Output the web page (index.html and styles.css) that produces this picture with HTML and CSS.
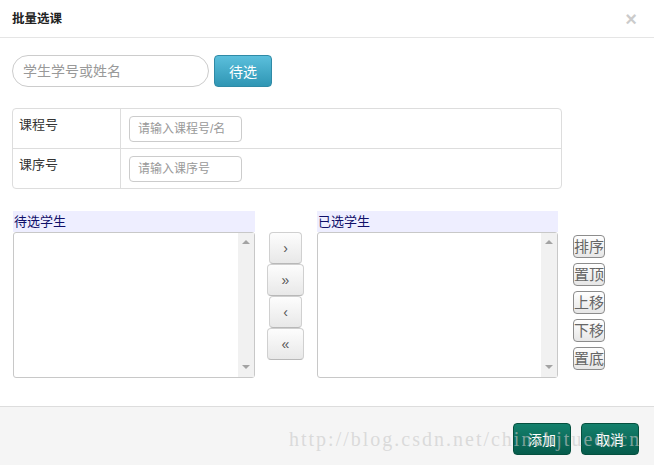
FILE: index.html
```html
<!DOCTYPE html>
<html lang="zh-CN">
  <head>
    <meta charset="UTF-8" />
    <meta name="viewport" content="width=device-width, initial-scale=1.0" />
    <title>批量选课</title>
    <link rel="stylesheet" href="styles.css">
  </head>
  <body>
    <div class="modal">
      <div class="modal-header">
        <h3>批量选课</h3>
        <span class="close">×</span>
      </div>

      <div class="modal-body">
        <div class="search">
          <input type="text" class="search-input" placeholder="学生学号或姓名" />
          <button class="btn-info">待选</button>
        </div>

        <table class="course-table">
          <tr>
            <td class="label">课程号</td>
            <td class="field"><input type="text" placeholder="请输入课程号/名" /></td>
          </tr>
          <tr>
            <td class="label">课序号</td>
            <td class="field"><input type="text" placeholder="请输入课序号" /></td>
          </tr>
        </table>

        <div class="picker">
          <div class="list-box left">
            <div class="list-title">待选学生</div>
            <div class="list">
              <div class="scroll"><span class="up"></span><span class="down"></span></div>
            </div>
          </div>

          <div class="move-btns">
            <button class="mv">›</button>
            <button class="mv wide">»</button>
            <button class="mv">‹</button>
            <button class="mv wide">«</button>
          </div>

          <div class="list-box right">
            <div class="list-title">已选学生</div>
            <div class="list">
              <div class="scroll"><span class="up"></span><span class="down"></span></div>
            </div>
          </div>

          <div class="order-btns">
            <button>排序</button>
            <button>置顶</button>
            <button>上移</button>
            <button>下移</button>
            <button>置底</button>
          </div>
        </div>
      </div>

      <!-- footer -->
      <div class="modal-footer">
        <button class="btn-ok">添加</button>
        <button class="btn-ok">取消</button>
      </div>
    </div>
    <div class="watermark">http://blog.csdn.net/chinabjtueducn</div>
  </body>
</html>
```

FILE: styles.css
```css
* {
  box-sizing: border-box;
}
body {
  margin: 0;
  background: #fff;
  color: #333;
  font-family: "Liberation Sans", "Noto Sans CJK SC", sans-serif;
  font-size: 13px;
}
button {
  font-family: "Liberation Sans", "Noto Sans CJK SC", sans-serif;
  cursor: pointer;
  padding: 0;
}
.modal {
  width: 654px;
  height: 465px;
  display: flex;
  flex-direction: column;
}
.modal-header {
  height: 38px;
  padding: 0 17px 0 12px;
  border-bottom: 1px solid #e5e5e5;
  display: flex;
  align-items: center;
  justify-content: space-between;
}
.modal-header h3 {
  margin: 0;
  font-size: 12.5px;
  font-weight: bold;
  color: #222;
  margin-top: -2px;
}
.close {
  font-size: 20px;
  font-weight: bold;
  color: #000;
  opacity: 0.2;
  margin-top: 2px;
}
.modal-body {
  flex: 1;
  padding: 17px 12px 0;
}
.search {
  display: flex;
  gap: 5px;
  margin-bottom: 21px;
}
.search-input {
  width: 197px;
  height: 32px;
  border: 1px solid #ccc;
  border-radius: 16px;
  padding: 0 10px;
  font-size: 14px;
  font-family: "Liberation Sans", "Noto Sans CJK SC", sans-serif;
}
.search-input::placeholder {
  color: #999;
}
.btn-info {
  width: 58px;
  height: 32px;
  border: 1px solid #2f8aa6;
  border-radius: 4px;
  background: linear-gradient(#5bbfdc, #2f96b4);
  color: #fff;
  font-size: 14px;
}
.course-table {
  width: 550px;
  border: 1px solid #ddd;
  border-radius: 4px;
  border-collapse: separate;
  border-spacing: 0;
  margin-bottom: 22px;
}
.course-table td {
  padding: 7px 8px 6px;
  vertical-align: top;
}
.course-table tr + tr td {
  border-top: 1px solid #ddd;
}
.course-table td.label {
  width: 108px;
  padding: 6px 6px 8px;
  line-height: 19px;
  border-right: 1px solid #ddd;
  color: #333;
}
.field input {
  display: block;
  width: 113px;
  height: 26px;
  border: 1px solid #ccc;
  border-radius: 4px;
  padding: 0 8px;
  font-size: 12px;
  font-family: "Liberation Sans", "Noto Sans CJK SC", sans-serif;
}
.field input::placeholder {
  color: #999;
}
.picker {
  display: flex;
  align-items: flex-start;
  padding-left: 1px;
}
.list-box.left {
  width: 242px;
}
.list-box.right {
  width: 241px;
}
.list-title {
  height: 21px;
  line-height: 21px;
  background: #eeeeff;
  color: #10106a;
  font-size: 13px;
  padding-left: 1px;
}
.list {
  height: 146px;
  border: 1px solid #c8c8c8;
  border-radius: 3px;
  display: flex;
  justify-content: flex-end;
  background: #fff;
}
.scroll {
  width: 16px;
  background: #f1f1f1;
  display: flex;
  flex-direction: column;
  justify-content: space-between;
  align-items: center;
  padding: 7px 0 8px;
}
.up,
.down {
  width: 0;
  height: 0;
  border-left: 4px solid transparent;
  border-right: 4px solid transparent;
}
.up {
  border-bottom: 4px solid #a3a3a3;
}
.down {
  border-top: 4px solid #a3a3a3;
}
.move-btns {
  width: 37px;
  margin: 21px 13px 0 12px;
  display: flex;
  flex-direction: column;
  align-items: center;
}
.mv {
  width: 33px;
  height: 32px;
  border: 1px solid #d0d0d0;
  border-bottom-color: #b8b8b8;
  border-radius: 4px;
  background: linear-gradient(#fdfdfd, #e8e8e8);
  color: #555;
  font-size: 14px;
}
.mv.wide {
  width: 37px;
}
.order-btns {
  margin: 24px 0 0 15px;
  display: flex;
  flex-direction: column;
  gap: 5px;
}
.order-btns button {
  width: 32px;
  height: 23px;
  border: 1px solid #8c8c8c;
  border-radius: 4px;
  background: linear-gradient(#fff, #e6e6e6);
  color: #666;
  font-size: 15px;
  line-height: 20px;
}
.modal-footer {
  height: 59px;
  border-top: 1px solid #ddd;
  background: #f5f5f5;
  padding: 16px 15px 0;
  display: flex;
  justify-content: flex-end;
  align-items: flex-start;
  gap: 10px;
}
.btn-ok {
  width: 58px;
  height: 32px;
  border: 1px solid #05503f;
  border-radius: 4px;
  background: linear-gradient(#14806c, #065c4c);
  color: #fff;
  font-size: 14px;
}
.watermark {
  position: absolute;
  left: 289px;
  top: 429px;
  font-family: "Liberation Serif", serif;
  font-size: 20px;
  line-height: 20px;
  letter-spacing: 2px;
  color: rgba(200, 200, 200, 0.6);
  white-space: nowrap;
  pointer-events: none;
}
```
